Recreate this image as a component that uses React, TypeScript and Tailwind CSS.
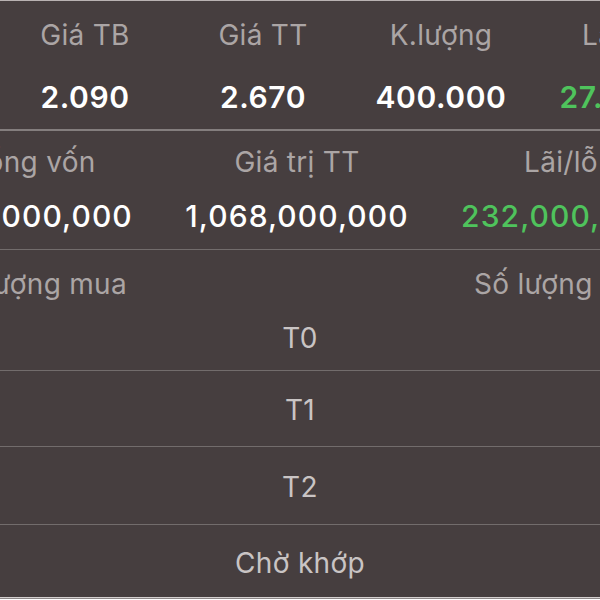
const topStats = [
  { label: "Giá TB", value: "2.090" },
  { label: "Giá TT", value: "2.670" },
  { label: "K.lượng", value: "400.000" },
  { label: "Lãi/lỗ", value: "27.75 %", green: true },
];

const totals = [
  { label: "Tổng vốn", value: "836,000,000" },
  { label: "Giá trị TT", value: "1,068,000,000" },
  { label: "Lãi/lỗ", value: "232,000,000", green: true },
];

const statusRows = [
  { name: "T1", pad: "pt-[23px] pb-[20px]" },
  { name: "T2", pad: "pt-[24px] pb-[21px]" },
  { name: "Chờ khớp", pad: "pt-[22px] pb-[18px]" },
];

export default function App() {
  return (
    <div
      className="w-[600px] h-[600px] overflow-hidden bg-[#463e3f] flex flex-col"
      style={{ fontFamily: "Inter, 'Noto Sans', sans-serif" }}
    >
      <div className="h-px bg-[#b9b2b2] shrink-0" />

      {/* average price / market price / volume */}
      <div className="flex -ml-[4px] pt-[18px] pb-[14px] shrink-0">
        {topStats.map((s) => (
          <div key={s.label} className="w-[178px] shrink-0 flex flex-col items-center whitespace-nowrap">
            <span className="text-[28px] leading-[32px] tracking-[0.3px] text-[#aba5a5]">{s.label}</span>
            <span
              className={`mt-[28px] text-[30px] leading-[36px] tracking-[0.6px] font-semibold ${
                s.green ? "text-[#4fc35c]" : "text-white"
              }`}
            >
              {s.value}
            </span>
          </div>
        ))}
      </div>
      <div className="h-[2px] bg-[#847e7e] shrink-0" />

      {/* capital totals */}
      <div className="flex -ml-[99px] pt-[15px] pb-[15px] shrink-0">
        {totals.map((t) => (
          <div key={t.label} className="w-[264px] shrink-0 flex flex-col items-center whitespace-nowrap">
            <span className="text-[28px] leading-[32px] tracking-[0.3px] text-[#aba5a5]">{t.label}</span>
            <span
              className={`mt-[20px] text-[30px] leading-[36px] tracking-[1.1px] font-medium ${
                t.green ? "text-[#4fc35c]" : "text-white"
              }`}
            >
              {t.value}
            </span>
          </div>
        ))}
      </div>
      <div className="h-px bg-[#726c6c] shrink-0" />

      {/* table header + first status */}
      <div className="flex pt-[18px] shrink-0 text-[28px] leading-[32px] tracking-[0.3px] text-[#aba5a5] whitespace-nowrap">
        <div className="w-[127px] shrink-0 flex justify-end">
          <span className="shrink-0">Khối lượng mua</span>
        </div>
        <span className="ml-[347px] shrink-0">Số lượng bán</span>
      </div>
      <div className="pt-[22px] pb-[16px] text-center text-[28px] leading-[32px] tracking-[0.3px] text-[#c9c4c4] shrink-0">
        T0
      </div>

      {statusRows.map((r) => (
        <div key={r.name} className="shrink-0">
          <div className="h-px bg-[#726c6c]" />
          <div className={`${r.pad} text-center text-[28px] leading-[32px] tracking-[0.3px] text-[#c9c4c4]`}>
            {r.name}
          </div>
        </div>
      ))}

      <div className="h-px bg-[#d6d1d1] shrink-0" />
      <div className="h-px bg-[#8d8888] shrink-0" />
      <div className="flex-1 bg-white" />
    </div>
  );
}
